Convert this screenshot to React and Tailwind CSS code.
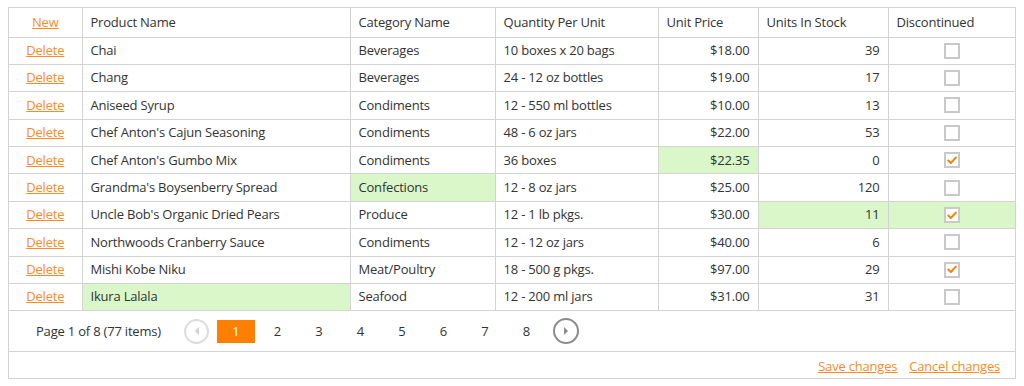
import React from "react";

const rows = [
  { name: "Chai", cat: "Beverages", qty: "10 boxes x 20 bags", price: "$18.00", stock: "39", disc: false },
  { name: "Chang", cat: "Beverages", qty: "24 - 12 oz bottles", price: "$19.00", stock: "17", disc: false },
  { name: "Aniseed Syrup", cat: "Condiments", qty: "12 - 550 ml bottles", price: "$10.00", stock: "13", disc: false },
  { name: "Chef Anton's Cajun Seasoning", cat: "Condiments", qty: "48 - 6 oz jars", price: "$22.00", stock: "53", disc: false },
  { name: "Chef Anton's Gumbo Mix", cat: "Condiments", qty: "36 boxes", price: "$22.35", stock: "0", disc: true, hl: ["price"] },
  { name: "Grandma's Boysenberry Spread", cat: "Confections", qty: "12 - 8 oz jars", price: "$25.00", stock: "120", disc: false, hl: ["cat"] },
  { name: "Uncle Bob's Organic Dried Pears", cat: "Produce", qty: "12 - 1 lb pkgs.", price: "$30.00", stock: "11", disc: true, hl: ["stock", "disc"] },
  { name: "Northwoods Cranberry Sauce", cat: "Condiments", qty: "12 - 12 oz jars", price: "$40.00", stock: "6", disc: false },
  { name: "Mishi Kobe Niku", cat: "Meat/Poultry", qty: "18 - 500 g pkgs.", price: "$97.00", stock: "29", disc: true },
  { name: "Ikura Lalala", cat: "Seafood", qty: "12 - 200 ml jars", price: "$31.00", stock: "31", disc: false, hl: ["name"] },
];

function Check({ checked }) {
  return (
    <div className="mx-auto w-4 h-4 border-2 border-[#c9c9c9] bg-white flex items-center justify-center">
      {checked && (
        <svg width="10" height="9" viewBox="0 0 10 9">
          <path d="M1.2 4.6 L3.8 7 L8.8 1.6" fill="none" stroke="#ff7f00" strokeWidth="2" strokeLinecap="round" strokeLinejoin="round" />
        </svg>
      )}
    </div>
  );
}

const hlc = "bg-[#d9f7c9]";

export default function App() {
  const td = "border-r border-b border-[#d3d3d3] px-2 h-[27.4px] p-0";
  return (
    <div className="bg-white w-[1024px] h-[386px] px-2 pt-[7px]" style={{ fontFamily: '"Open Sans", "Noto Sans", sans-serif' }}>
      <div className="border border-[#d3d3d3] text-[13px] tracking-[-0.2px] text-[#333]">
        <table className="w-full table-fixed border-collapse">
          <colgroup>
            <col className="w-[73px]" />
            <col className="w-[268px]" />
            <col className="w-[145px]" />
            <col className="w-[163px]" />
            <col className="w-[100px]" />
            <col className="w-[130px]" />
            <col />
          </colgroup>
          <thead>
            <tr>
              <th className="border-r border-b border-[#d3d3d3] h-[29px] font-normal text-center">
                <a className="text-[#ff8a1f] underline cursor-pointer">New</a>
              </th>
              <th className="border-r border-b border-[#d3d3d3] px-2 font-normal text-left">Product Name</th>
              <th className="border-r border-b border-[#d3d3d3] px-2 font-normal text-left">Category Name</th>
              <th className="border-r border-b border-[#d3d3d3] px-2 font-normal text-left">Quantity Per Unit</th>
              <th className="border-r border-b border-[#d3d3d3] px-2 font-normal text-left">Unit Price</th>
              <th className="border-r border-b border-[#d3d3d3] px-2 font-normal text-left">Units In Stock</th>
              <th className="border-b border-[#d3d3d3] px-2 font-normal text-left">Discontinued</th>
            </tr>
          </thead>
          <tbody>
            {rows.map((r, i) => {
              const h = (k) => (r.hl && r.hl.includes(k) ? hlc : "");
              return (
                <tr key={i}>
                  <td className={`${td} text-center`}>
                    <a className="text-[#ff8a1f] underline cursor-pointer">Delete</a>
                  </td>
                  <td className={`${td} ${h("name")}`}>{r.name}</td>
                  <td className={`${td} ${h("cat")}`}>{r.cat}</td>
                  <td className={`${td}`}>{r.qty}</td>
                  <td className={`${td} text-right ${h("price")}`}>{r.price}</td>
                  <td className={`${td} text-right ${h("stock")}`}>{r.stock}</td>
                  <td className={`border-b border-[#d3d3d3] h-[27.4px] ${h("disc")}`}>
                    <Check checked={r.disc} />
                  </td>
                </tr>
              );
            })}
          </tbody>
        </table>
        <div className="h-[41px] flex items-center pl-[27px] border-b border-[#d3d3d3]">
          <span className="w-[122px] whitespace-nowrap">Page 1 of 8 (77 items)</span>
          <div className="ml-[26px] w-[25px] h-[25px] rounded-full border-2 border-[#dcdcdc] flex items-center justify-center">
            <svg width="8" height="10" viewBox="0 0 8 10"><path d="M6 1 L2 5 L6 9 Z" fill="#d0d0d0" /></svg>
          </div>
          <div className="ml-[8px] flex items-center gap-[4px]">
            <div className="w-[37.5px] h-[23px] bg-[#ff8000] text-white flex items-center justify-center">1</div>
            {["2", "3", "4", "5", "6", "7", "8"].map((n) => (
              <div key={n} className="w-[37.5px] h-[23px] flex items-center justify-center">{n}</div>
            ))}
          </div>
          <div className="ml-[8px] w-[26px] h-[26px] rounded-full border-2 border-[#8c8c8c] flex items-center justify-center">
            <svg width="8" height="10" viewBox="0 0 8 10"><path d="M2 1 L6 5 L2 9 Z" fill="#8c8c8c" /></svg>
          </div>
        </div>
        <div className="h-[26px] flex items-center justify-end pr-[15px] gap-[12px] pt-[2px]">
          <a className="text-[#ff8a1f] underline cursor-pointer">Save changes</a>
          <a className="text-[#ff8a1f] underline cursor-pointer">Cancel changes</a>
        </div>
      </div>
    </div>
  );
}
